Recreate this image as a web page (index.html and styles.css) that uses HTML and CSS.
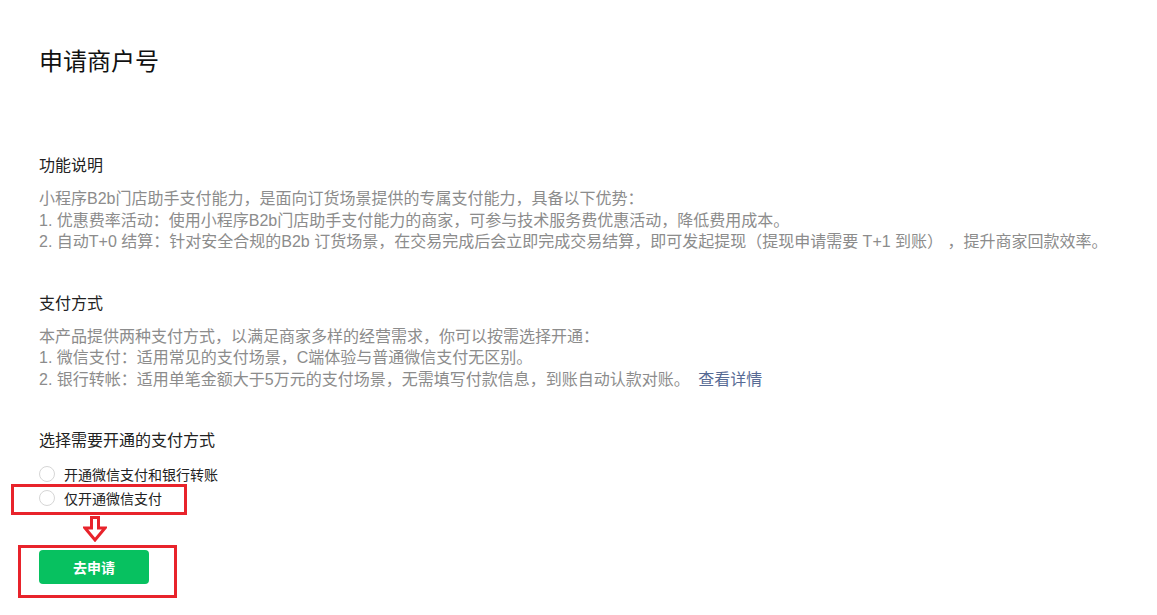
FILE: index.html
```html
<!DOCTYPE html>
<html lang="zh-CN">
<head>
<meta charset="utf-8">
<title>申请商户号</title>
<link rel="stylesheet" href="styles.css">
</head>
<body>
<div class="page">
  <h1 class="title">申请商户号</h1>

  <section class="sec sec-first">
    <h2 class="sec-title">功能说明</h2>
    <div class="desc">
      <p>小程序B2b门店助手支付能力，是面向订货场景提供的专属支付能力，具备以下优势：</p>
      <p>1. 优惠费率活动：使用小程序B2b门店助手支付能力的商家，可参与技术服务费优惠活动，降低费用成本。</p>
      <p>2. 自动T+0 结算：针对安全合规的B2b 订货场景，在交易完成后会立即完成交易结算，即可发起提现（提现申请需要 T+1 到账） ，提升商家回款效率。</p>
    </div>
  </section>

  <section class="sec">
    <h2 class="sec-title">支付方式</h2>
    <div class="desc">
      <p>本产品提供两种支付方式，以满足商家多样的经营需求，你可以按需选择开通：</p>
      <p>1. 微信支付：适用常见的支付场景，C端体验与普通微信支付无区别。</p>
      <p>2. 银行转帐：适用单笔金额大于5万元的支付场景，无需填写付款信息，到账自动认款对账。 <a class="link" href="#">查看详情</a></p>
    </div>
  </section>

  <section class="sec">
    <h2 class="sec-title">选择需要开通的支付方式</h2>
    <div class="options">
      <label class="opt"><span class="radio"></span><span class="opt-text">开通微信支付和银行转账</span></label>
      <label class="opt"><span class="radio"></span><span class="opt-text">仅开通微信支付</span></label>
    </div>
    <button class="btn" type="button">去申请</button>
  </section>

  <div class="mark mark-opt"></div>
  <svg class="mark-arrow" width="24" height="26" viewBox="0 0 24 26">
    <polygon points="8.5,1.5 15.5,1.5 15.5,12 22,12 12,24 2,12 8.5,12" fill="#fff" stroke="#e8232b" stroke-width="3" stroke-linejoin="miter"/>
  </svg>
  <div class="mark mark-btn"></div>
</div>
</body>
</html>
```

FILE: styles.css
```css
* { box-sizing: border-box; }
html, body {
  margin: 0;
  padding: 0;
  background: #fff;
}
body {
  font-family: "Liberation Sans", "Noto Sans CJK SC", sans-serif;
  color: #1a1a1a;
}
.page {
  position: relative;
  width: 1157px;
  height: 615px;
  padding: 46px 0 0 39px;
  overflow: hidden;
}
.title {
  margin: 0;
  font-size: 24px;
  line-height: 32px;
  font-weight: normal;
  color: #111;
}
.sec { margin-top: 40px; }
.sec-first { margin-top: 77px; }
.sec-title {
  margin: 0;
  font-size: 16px;
  line-height: 22px;
  font-weight: normal;
  color: #222;
}
.desc {
  margin-top: 11px;
  font-size: 16px;
  line-height: 21.5px;
  color: #8c8c8c;
}
.desc p { margin: 0; white-space: nowrap; }
.link {
  color: #576b95;
  text-decoration: none;
  margin-left: 4px;
}
.options {
  margin-top: 10px;
  display: flex;
  flex-direction: column;
}
.opt {
  display: flex;
  align-items: center;
  height: 24px;
  font-size: 14px;
  color: #222;
}
.radio {
  width: 16px;
  height: 16px;
  border: 1px solid #d6d6d6;
  border-radius: 50%;
  margin-right: 9px;
  background: #fff;
}
.btn {
  margin-top: 40px;
  width: 110px;
  height: 34px;
  border: none;
  border-radius: 4px;
  background: #07c160;
  color: #fff;
  font-family: "Liberation Sans", "Noto Sans CJK SC", sans-serif;
  font-size: 14px;
  font-weight: bold;
  padding: 0;
}
.mark {
  position: absolute;
  border: 3px solid #e8232b;
}
.mark-opt { left: 11px; top: 484px; width: 176px; height: 31px; }
.mark-btn { left: 18px; top: 545px; width: 159px; height: 53px; }
.mark-arrow { position: absolute; left: 83px; top: 516px; }
```
